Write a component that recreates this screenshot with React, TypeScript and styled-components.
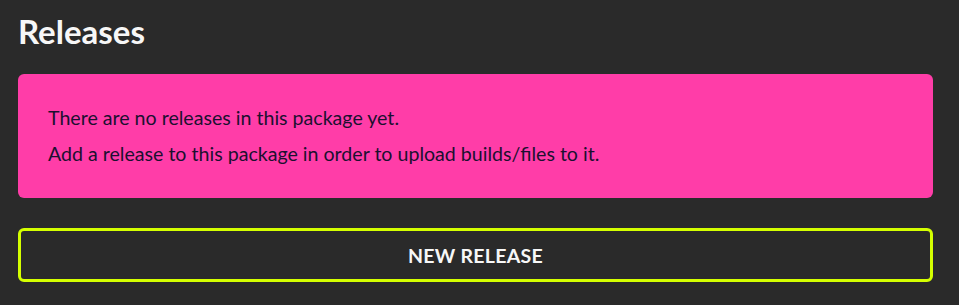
import styled, { createGlobalStyle } from "styled-components";

const GlobalStyle = createGlobalStyle`
  * {
    box-sizing: border-box;
  }
  body {
    margin: 0;
    background-color: #2a2a2a;
    font-family: "Nunito", "Lato", sans-serif;
  }
`;

function App() {
  return (
    <Page>
      <GlobalStyle />
      <Title>Releases</Title>
      <Notice>
        <p>There are no releases in this package yet.</p>
        <p>Add a release to this package in order to upload builds/files to it.</p>
      </Notice>
      <Button>NEW RELEASE</Button>
    </Page>
  );
}

const Page = styled.div`
  width: 100%;
  min-height: 305px;
  background-color: #2a2a2a;
  padding: 10px 26px 24px 18px;
  display: flex;
  flex-direction: column;
`;

const Title = styled.h1`
  margin: 0 0 22px 0;
  color: #f7f7f7;
  font-family: "Lato", sans-serif;
  font-weight: 700;
  font-size: 33px;
  line-height: 42px;
`;

const Notice = styled.div`
  background-color: #ff3da8;
  border-radius: 6px;
  padding: 30px 30px 31px 30px;
  color: #1b1030;
  font-family: "Lato", sans-serif;
  font-size: 19.6px;
  line-height: 27px;

  p {
    margin: 0;
  }
  p + p {
    margin-top: 9px;
  }
`;

const Button = styled.button`
  margin-top: 30px;
  height: 54px;
  width: 100%;
  background-color: transparent;
  border: 3px solid #d4ff00;
  border-radius: 6px;
  color: #f7f7f7;
  font-family: "Lato", sans-serif;
  font-weight: 700;
  font-size: 19.5px;
  letter-spacing: 0.3px;
  cursor: pointer;
`;

export default App;
